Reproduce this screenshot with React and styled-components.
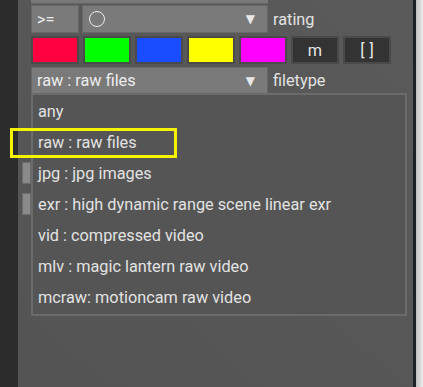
import React from "react";
import styled, { createGlobalStyle } from "styled-components";

const Global = createGlobalStyle`
    html, body {
        margin: 0;
        padding: 0;
        background: #2c2c2c;
    }
    body {
        font-family: Roboto, "Liberation Sans", sans-serif;
    }
`;

const Page = styled.div`
    position: relative;
    display: flex;
    width: 423px;
    height: 387px;
    overflow: hidden;
`;

const LeftStrip = styled.div`
    width: 18px;
    background: #2c2c2c;
`;

const Panel = styled.div`
    position: relative;
    width: 395px;
    padding-left: 13px;
    box-sizing: border-box;
    background: linear-gradient(to bottom left, #5a5a5a 0%, #545454 100%);
    color: #e2e2e2;
    font-size: 16.3px;
`;

const RightEdge = styled.div`
    width: 3px;
    background: #1f2224;
`;

const Backdrop = styled.div`
    flex: 1;
    background: linear-gradient(to right, #bfbfbf, #ececec);
`;

const TopStub = styled.div`
    width: 237px;
    height: 3px;
    background: #787878;
    border-bottom: 1px solid #666;
`;

const Row = styled.div`
    display: flex;
    align-items: center;
    gap: ${(p) => p.$gap || 3}px;
    margin-top: ${(p) => p.$top || 3}px;
    height: ${(p) => p.$h || 28}px;
`;

const Box = styled.div`
    box-sizing: border-box;
    width: ${(p) => p.$w}px;
    height: 100%;
    display: flex;
    align-items: center;
    padding: 0 5px;
    background: #7a7a7a;
    border: 1px solid #686868;
    color: #ececec;
`;

const Combo = styled(Box)`
    justify-content: space-between;
`;

const Arrow = styled.span`
    font-family: "DejaVu Sans", sans-serif;
    font-size: 12px;
    color: #e8e8e8;
    margin-right: 7px;
`;

const Circle = styled.span`
    box-sizing: border-box;
    width: 16px;
    height: 16px;
    border: 1.5px solid #ececec;
    border-radius: 50%;
    margin-left: 1px;
`;

const Label = styled.span`
    margin-left: 2px;
    color: #e2e2e2;
`;

const Swatch = styled.div`
    box-sizing: border-box;
    width: 48px;
    height: 100%;
    background: ${(p) => p.$color};
    border: 2px solid #4a4a4a;
    display: flex;
    align-items: center;
    justify-content: center;
    color: #e6e6e6;
    word-spacing: 1px;
`;

const HiddenRow = styled.div`
    display: flex;
    flex-direction: column;
    gap: 9px;
    margin-top: 68px;
    margin-left: -9px;
`;

const HiddenButton = styled.div`
    width: 9px;
    height: 22px;
    background: #8a8a8a;
    border: 1px solid #6a6a6a;
    box-sizing: border-box;
`;

const List = styled.div`
    position: absolute;
    top: 93px;
    left: 13px;
    width: 376px;
    height: 223px;
    box-sizing: border-box;
    border: 2px solid #6b6b6b;
    background: #555;
    padding-top: 1px;
`;

const Item = styled.div`
    height: 31px;
    line-height: 31px;
    padding-left: 5px;
    color: #e2e2e2;
    white-space: nowrap;
`;

const Highlight = styled.div`
    position: absolute;
    left: 10px;
    top: 128px;
    width: 167px;
    height: 30px;
    box-sizing: border-box;
    border: 3px solid #f4f400;
`;

const colors = ["#ff0040", "#00ff00", "#1a4dff", "#ffff00", "#ff00ff"];

const items = [
    "any",
    "raw : raw files",
    "jpg : jpg images",
    "exr : high dynamic range scene linear exr",
    "vid : compressed video",
    "mlv : magic lantern raw video",
    "mcraw: motioncam raw video",
];

export default function App() {
    return (
        <Page>
            <Global />
            <LeftStrip />
            <Panel>
                <TopStub />
                <Row $top={1}>
                    <Box $w={48}>&gt;=</Box>
                    <Combo $w={186}>
                        <Circle />
                        <Arrow>▼</Arrow>
                    </Combo>
                    <Label>rating</Label>
                </Row>
                <Row $gap={4} $top={3} $h={28}>
                    {colors.map((c) => (
                        <Swatch key={c} $color={c} />
                    ))}
                    <Swatch $color="#333">m</Swatch>
                    <Swatch $color="#333">[ ]</Swatch>
                </Row>
                <Row $top={3} $h={27}>
                    <Combo $w={237}>
                        <span>raw : raw files</span>
                        <Arrow>▼</Arrow>
                    </Combo>
                    <Label>filetype</Label>
                </Row>
                <HiddenRow>
                    <HiddenButton />
                    <HiddenButton />
                </HiddenRow>
                <List>
                    {items.map((t) => (
                        <Item key={t}>{t}</Item>
                    ))}
                </List>
            </Panel>
            <RightEdge />
            <Backdrop />
            <Highlight />
        </Page>
    );
}
